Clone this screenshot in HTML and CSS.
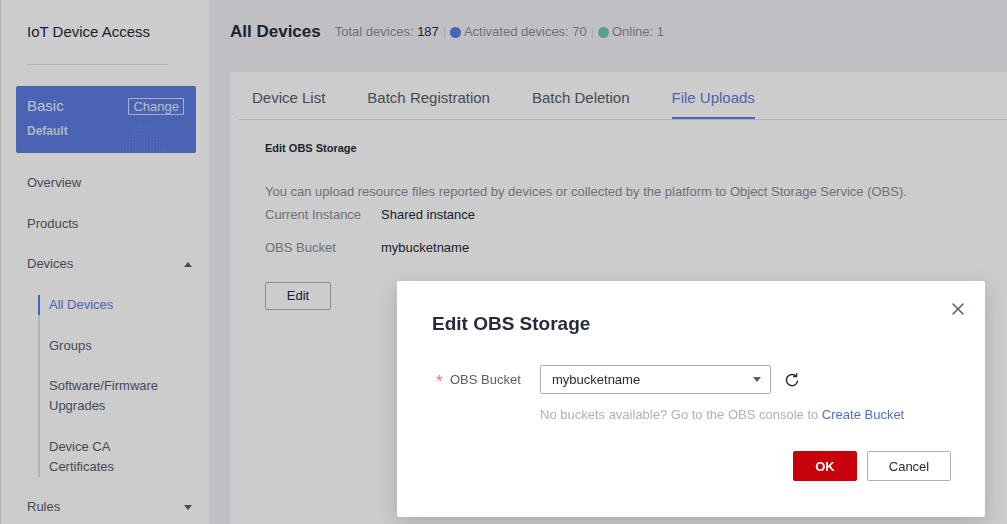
FILE: index.html
```html
<!DOCTYPE html>
<html lang="en">
<head>
<meta charset="utf-8">
<title>All Devices - File Uploads</title>
<link rel="stylesheet" href="styles.css">
</head>
<body>
<div class="page">
  <aside class="sidebar">
    <div class="brand">IoT Device Access</div>
    <div class="divider"></div>
    <div class="plan">
      <div class="plan-row">
        <span class="plan-name">Basic</span>
        <span class="plan-change">Change</span>
      </div>
      <div class="plan-sub">Default</div>
    </div>
    <nav class="nav">
      <div class="nav-item">Overview</div>
      <div class="nav-item">Products</div>
      <div class="nav-item has-caret">Devices <span class="caret caret-up"></span></div>
      <div class="subnav">
        <div class="sub-item active">All Devices</div>
        <div class="sub-item">Groups</div>
        <div class="sub-item">Software/Firmware<br>Upgrades</div>
        <div class="sub-item">Device CA<br>Certificates</div>
      </div>
      <div class="nav-item has-caret">Rules <span class="caret caret-down"></span></div>
    </nav>
  </aside>

  <main class="main">
    <header class="head">
      <h1 class="head-title">All Devices</h1>
      <div class="stats">
        <span class="stat-label">Total devices:</span>&nbsp;<span class="stat-num">187</span>
        <span class="sep">|</span>
        <span class="dot dot-blue"></span>
        <span class="stat-label">Activated devices: 70</span>
        <span class="sep">|</span>
        <span class="dot dot-green"></span>
        <span class="stat-label">Online: 1</span>
      </div>
    </header>

    <section class="card">
      <div class="tabs">
        <div class="tab">Device List</div>
        <div class="tab">Batch Registration</div>
        <div class="tab">Batch Deletion</div>
        <div class="tab active">File Uploads</div>
      </div>
      <div class="card-body">
        <div class="section-title">Edit OBS Storage</div>
        <p class="desc">You can upload resource files reported by devices or collected by the platform to Object Storage Service (OBS).</p>
        <div class="info-row first"><span class="info-label">Current Instance</span><span class="info-value">Shared instance</span></div>
        <div class="info-row"><span class="info-label">OBS Bucket</span><span class="info-value">mybucketname</span></div>
        <button class="btn-edit">Edit</button>
      </div>
    </section>
  </main>
</div>

<div class="mask"></div>

<div class="modal">
  <div class="modal-head">
    <h2 class="modal-title">Edit OBS Storage</h2>
    <span class="modal-close">
      <svg width="14" height="14" viewBox="0 0 14 14"><path d="M2 2 L12 12 M12 2 L2 12" stroke="#575d6c" stroke-width="1.5" fill="none" stroke-linecap="round"/></svg>
    </span>
  </div>
  <div class="form-row">
    <label class="form-label"><span class="req">*</span>OBS Bucket</label>
    <div class="select">
      <span>mybucketname</span>
      <span class="select-caret"></span>
    </div>
    <span class="refresh">
      <svg width="16" height="16" viewBox="0 0 16 16"><path d="M12.2 4.3 A5.6 5.6 0 1 0 13.5 9.3" stroke="#252b3a" stroke-width="1.4" fill="none" stroke-linecap="round"/><path d="M12.6 1.6 V4.6 H9.6" stroke="#252b3a" stroke-width="1.4" fill="none" stroke-linecap="round" stroke-linejoin="round"/></svg>
    </span>
  </div>
  <div class="hint">No buckets available? Go to the OBS console to <a class="link">Create Bucket</a></div>
  <div class="modal-foot">
    <button class="btn btn-ok">OK</button>
    <button class="btn btn-cancel">Cancel</button>
  </div>
</div>
</body>
</html>
```

FILE: styles.css
```css
* { box-sizing: border-box; }

html, body {
  margin: 0;
  padding: 0;
  width: 1007px;
  height: 524px;
  overflow: hidden;
  font-family: "Liberation Sans", Arial, sans-serif;
  color: #252b3a;
}

.page {
  display: flex;
  height: 524px;
  background: #f0f1f5;
}

/* Sidebar */
.sidebar {
  width: 209px;
  flex: none;
  background: #ffffff;
  border-left: 1px solid #dcdcdc;
  padding: 22px 13px 0 15px;
}

.brand {
  font-size: 15px;
  line-height: 20px;
  padding-left: 11px;
  color: #252b3a;
}

.divider {
  margin: 22px 0 0 11px;
  width: 141px;
  height: 1px;
  background: #dfe1e6;
}

.plan {
  position: relative;
  overflow: hidden;
  margin-top: 21px;
  width: 180px;
  height: 67px;
  background: #5d7ce0;
  border-radius: 2px;
  padding: 10px 12px 0 11px;
}

.plan::after {
  content: "";
  position: absolute;
  left: 100px;
  top: 28px;
  width: 56px;
  height: 42px;
  background-image: radial-gradient(circle, rgba(255,255,255,0.12) 0.8px, transparent 1px);
  background-size: 3px 3px;
  clip-path: polygon(50% 0, 100% 100%, 0 100%);
}

.plan-row {
  display: flex;
  justify-content: space-between;
  align-items: center;
  height: 20px;
}

.plan-name {
  font-size: 15px;
  line-height: 20px;
  color: rgba(255,255,255,0.92);
}

.plan-change {
  font-size: 13px;
  line-height: 15px;
  padding: 0 4px;
  border: 1px solid rgba(255,255,255,0.75);
  color: rgba(255,255,255,0.85);
  border-radius: 1px;
}

.plan-sub {
  margin-top: 6px;
  font-size: 12px;
  line-height: 18px;
  font-weight: bold;
  color: rgba(255,255,255,0.78);
}

.nav {
  margin-top: 10px;
}

.nav-item {
  font-size: 13px;
  line-height: 20px;
  padding: 10.25px 4px 10.25px 11px;
  color: #575d6c;
  display: flex;
  justify-content: space-between;
  align-items: center;
}

.caret {
  width: 0;
  height: 0;
  border-left: 4px solid transparent;
  border-right: 4px solid transparent;
}
.caret-up { border-bottom: 5px solid #575d6c; }
.caret-down { border-top: 5px solid #575d6c; }

.subnav {
  margin: 10.5px 0 10.5px 22px;
  border-left: 2px solid #dfe1e6;
  display: flex;
  flex-direction: column;
  gap: 20.5px;
}

.sub-item {
  font-size: 13px;
  line-height: 20px;
  padding-left: 9px;
  color: #575d6c;
}

.sub-item.active {
  color: #5e7ce0;
  border-left: 2px solid #5e7ce0;
  margin-left: -2px;
}

/* Main */
.main {
  flex: 1;
  min-width: 0;
  padding-left: 21px;
  display: flex;
  flex-direction: column;
}

.head {
  height: 62px;
  display: flex;
  align-items: center;
  gap: 14px;
  margin-bottom: 10px;
  padding-top: 1px;
}

.head-title {
  margin: 0;
  font-size: 17px;
  font-weight: bold;
  color: #252b3a;
  line-height: 22px;
}

.stats {
  display: flex;
  align-items: center;
  font-size: 13px;
  color: #8a8e99;
  line-height: 20px;
  padding-top: 1px;
}

.stat-num { color: #252b3a; }

.sep {
  color: #d4d6dc;
  margin: 0 4px;
  font-size: 12px;
}

.dot {
  width: 11px;
  height: 11px;
  border-radius: 50%;
  margin-right: 3px;
}
.dot-blue { background: #5e7ce0; }
.dot-green { background: #73c9a8; }

.card {
  flex: 1;
  background: #ffffff;
  margin-right: -20px;
}

.tabs {
  margin-left: 8px;
  padding-left: 14px;
  display: flex;
  gap: 42px;
  height: 48px;
  border-bottom: 1px solid #dfe1e6;
}

.tab {
  font-size: 15px;
  line-height: 20px;
  padding: 16px 0 9px;
  border-bottom: 2px solid transparent;
  color: #575d6c;
}

.tab.active {
  color: #5e7ce0;
  border-bottom-color: #5e7ce0;
}

.card-body {
  padding: 20px 35px 0;
}

.section-title {
  font-size: 11px;
  font-weight: bold;
  line-height: 16px;
  color: #252b3a;
}

.desc {
  margin: 26px 0 0;
  font-size: 13px;
  line-height: 20px;
  color: #8a8e99;
}

.info-row {
  display: flex;
  font-size: 13px;
  line-height: 20px;
  margin-top: 12.5px;
}
.info-row.first { margin-top: 3px; }

.info-label {
  width: 116px;
  color: #8a8e99;
}
.info-value { color: #252b3a; }

.btn-edit {
  margin-top: 24px;
  width: 66px;
  height: 28px;
  border: 1px solid #adb0b8;
  background: #ffffff;
  border-radius: 2px;
  font-family: inherit;
  font-size: 13px;
  color: #252b3a;
}

/* Overlay */
.mask {
  position: fixed;
  inset: 0;
  background: rgba(0,0,0,0.2);
}

.modal {
  position: fixed;
  left: 397px;
  top: 281px;
  width: 588px;
  height: 236px;
  background: #ffffff;
  border-radius: 2px;
  box-shadow: 0 6px 24px rgba(0,0,0,0.18);
  padding: 21px 20px 35px 0;
}

.modal-head {
  display: flex;
  justify-content: space-between;
  align-items: flex-start;
  padding-left: 35px;
}

.modal-title {
  margin: 9px 0 0;
  font-size: 19px;
  line-height: 26px;
  font-weight: bold;
  color: #252b3a;
}

.modal-close {
  display: flex;
  width: 14px;
  height: 14px;
}

.form-row {
  display: flex;
  align-items: center;
  margin-top: 28px;
  padding-left: 39px;
}

.form-label {
  width: 104px;
  font-size: 13px;
  line-height: 20px;
  color: #575d6c;
  display: flex;
  align-items: center;
}

.req {
  color: #f66f6a;
  width: 14px;
  font-size: 17px;
  line-height: 14px;
  padding-top: 5px;
}

.select {
  width: 231px;
  height: 29px;
  border: 1px solid #adb0b8;
  border-radius: 2px;
  display: flex;
  align-items: center;
  justify-content: space-between;
  padding: 0 9px 0 11px;
  font-size: 13px;
  color: #252b3a;
}

.select-caret {
  width: 0;
  height: 0;
  border-left: 4px solid transparent;
  border-right: 4px solid transparent;
  border-top: 5px solid #575d6c;
}

.refresh {
  display: flex;
  margin-left: 13px;
}

.hint {
  margin: 12px 0 0 143px;
  font-size: 13px;
  line-height: 18px;
  color: #adb0b8;
}

.link {
  color: #526ecc;
}

.modal-foot {
  display: flex;
  justify-content: flex-end;
  gap: 10px;
  margin-top: 27px;
  padding-right: 14px;
}

.btn {
  height: 30px;
  border-radius: 2px;
  font-family: inherit;
  font-size: 13px;
}

.btn-ok {
  width: 64px;
  background: #c7000b;
  border: 1px solid #c7000b;
  color: #ffffff;
  font-weight: bold;
}

.btn-cancel {
  width: 84px;
  background: #ffffff;
  border: 1px solid #adb0b8;
  color: #252b3a;
}
```
